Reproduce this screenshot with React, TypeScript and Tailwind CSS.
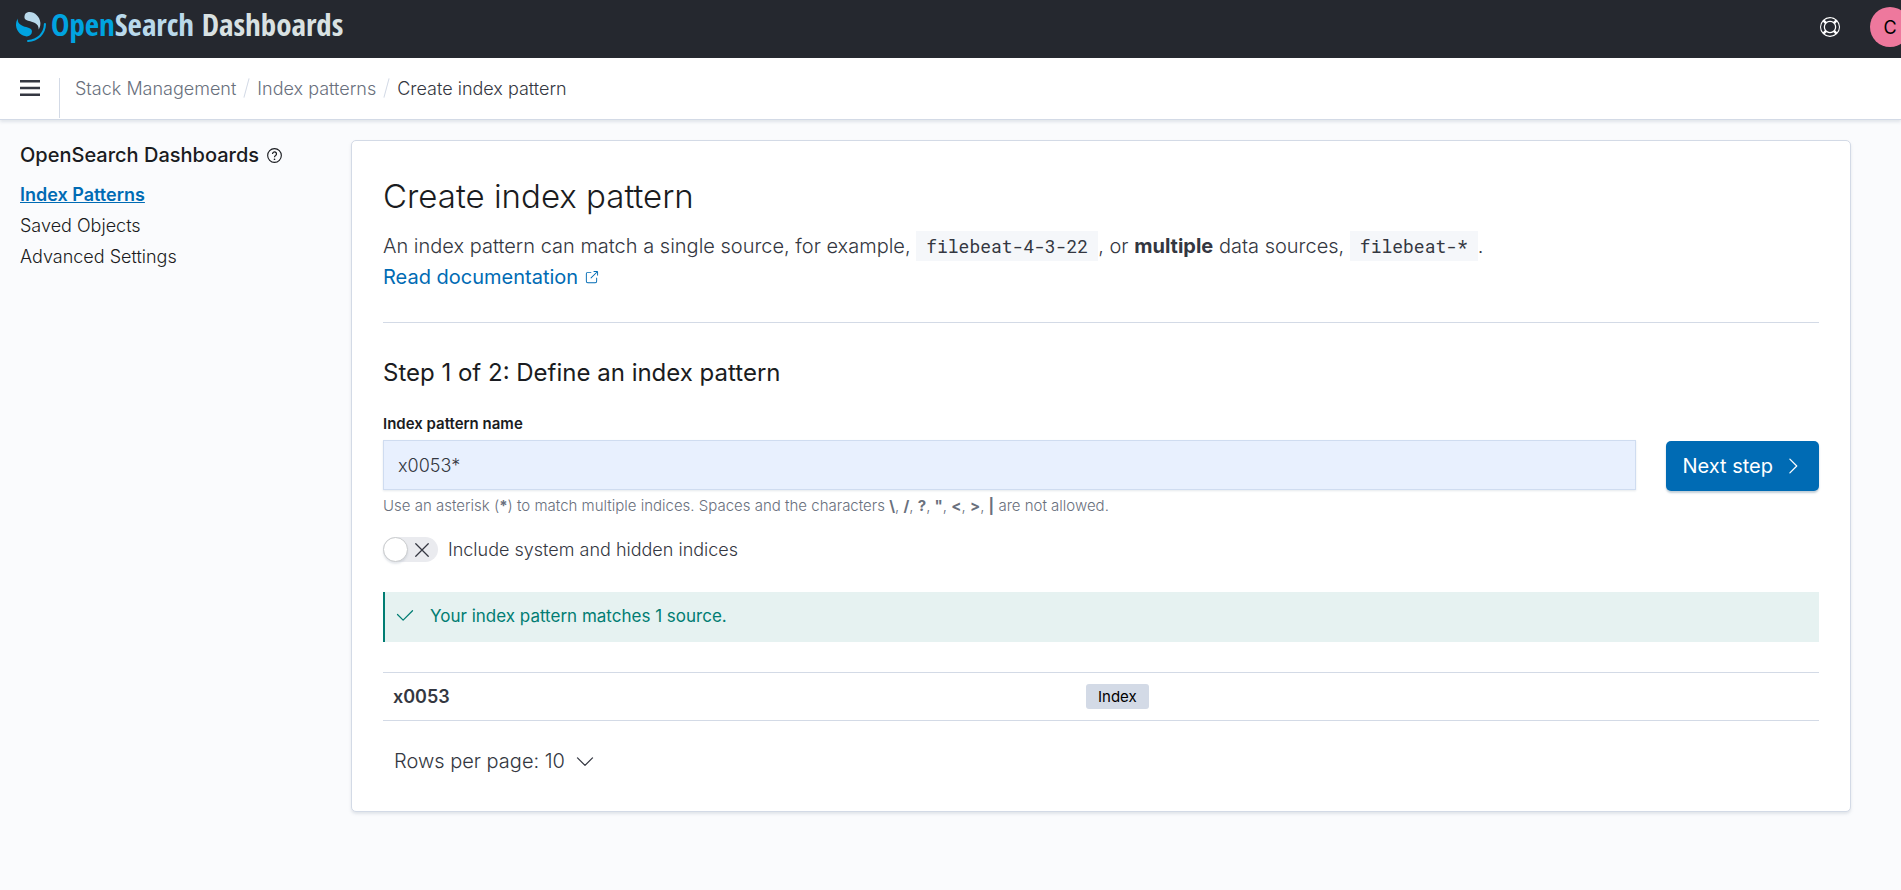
import { useState, type ReactNode } from "react";

type IconProps = { className?: string };

function LogoMark({ className }: IconProps) {
  return (
    <svg className={className} viewBox="0 0 64 64" aria-hidden="true">
      <path
        fill="#00A3E0"
        d="M61.74 23.5a2.26 2.26 0 0 0-2.26 2.26c0 18.62-15.1 33.71-33.72 33.71a2.26 2.26 0 0 0 0 4.53C46.88 64 64 46.88 64 25.76a2.26 2.26 0 0 0-2.26-2.26Z"
      />
      <path
        fill="#B9D9EB"
        d="M48.08 38c2.18-3.55 4.28-8.28 3.87-14.91C51.09 9.37 38.66-1.04 26.92.08c-4.6.45-9.31 4.19-8.9 10.9.19 2.92 1.62 4.64 3.93 5.96 2.21 1.26 5.05 2.06 8.26 2.96 3.89 1.09 8.39 2.32 11.85 4.87 4.15 3.06 6.99 6.6 6.02 13.23Z"
      />
      <path
        fill="#00A3E0"
        d="M3.92 14C1.74 17.55-.36 22.28.05 28.91c.86 13.72 13.29 24.13 25.03 23.01 4.59-.45 9.31-4.19 8.89-10.9-.18-2.92-1.6-4.64-3.92-5.96-2.21-1.26-5.05-2.06-8.26-2.96-3.89-1.09-8.39-2.32-11.85-4.87C5.79 24.17 2.95 20.63 3.92 14Z"
      />
    </svg>
  );
}

function HelpRingIcon({ className }: IconProps) {
  return (
    <svg className={className} viewBox="0 0 16 16" fill="currentColor" aria-hidden="true">
      <path d="M13.6 12.186l-1.357-1.358c-.025-.025-.058-.034-.084-.056.53-.794.84-1.746.84-2.773a4.977 4.977 0 00-.84-2.772c.026-.02.059-.03.084-.056L13.6 3.813a6.96 6.96 0 010 8.373zM8 15A6.956 6.956 0 013.814 13.6l1.358-1.358c.025-.025.034-.057.055-.084C6.02 12.688 6.974 13 8 13a4.978 4.978 0 002.773-.84c.02.026.03.058.056.083l1.357 1.358A6.956 6.956 0 018 15zm-5.601-2.813a6.963 6.963 0 010-8.373l1.359 1.358c.024.025.057.035.084.056A4.97 4.97 0 003 8c0 1.027.31 1.98.842 2.773-.027.022-.06.031-.084.056l-1.36 1.358zm5.6-.187A4 4 0 118 4a4 4 0 010 8zM8 1c1.573 0 3.019.525 4.187 1.4l-1.357 1.358c-.025.025-.035.057-.056.084A4.979 4.979 0 008 3a4.979 4.979 0 00-2.773.842c-.021-.027-.03-.059-.055-.084L3.814 2.4A6.957 6.957 0 018 1zm0-1a8.001 8.001 0 10.003 16.002A8.001 8.001 0 008 0z" />
    </svg>
  );
}

function MenuIcon({ className }: IconProps) {
  return (
    <svg className={className} viewBox="0 0 20 16" fill="currentColor" aria-hidden="true">
      <path d="M0 0h20v2.500H0zM0 6.750h20v2.500H0zM0 13.500h20V16H0z" />
    </svg>
  );
}

function QuestionIcon({ className }: IconProps) {
  return (
    <svg className={className} viewBox="0 0 16 16" fill="none" stroke="currentColor" aria-hidden="true">
      <circle cx="8" cy="8" r="7.3" strokeWidth="1.2" />
      <path d="M5.9 6.3a2.1 2.1 0 1 1 3.3 1.7C8.4 8.500 8 8.900 8 9.900" strokeWidth="1.3" />
      <circle cx="8" cy="12" r=".9" fill="currentColor" stroke="none" />
    </svg>
  );
}

function PopoutIcon({ className }: IconProps) {
  return (
    <svg className={className} viewBox="0 0 16 16" fill="currentColor" aria-hidden="true">
      <path d="M13 8.500a.5.5 0 111 0V12a2 2 0 01-2 2H4a2 2 0 01-2-2V4a2 2 0 012-2h3.500a.5.5 0 010 1H4a1 1 0 00-1 1v8a1 1 0 001 1h8a1 1 0 001-1V8.500zm-5.120.339a.5.5 0 11-.706-.707L13.305 2H10.500a.5.5 0 110-1H14a1 1 0 011 1v3.500a.5.5 0 11-1 0V2.720L7.880 8.838z" />
    </svg>
  );
}

function StrokeIcon({ className, d }: IconProps & { d: string }) {
  return (
    <svg
      className={className}
      viewBox="0 0 16 16"
      fill="none"
      stroke="currentColor"
      strokeLinecap="round"
      strokeLinejoin="round"
      aria-hidden="true"
    >
      <path d={d} />
    </svg>
  );
}

function Code({ children }: { children: ReactNode }) {
  return (
    <code className="bg-[#f5f7fa] px-[10px] py-[3px] font-['Roboto_Mono','DejaVu_Sans_Mono',monospace] text-[18px] font-normal text-[#343741]">
      {children}
    </code>
  );
}

function Slash() {
  return <span aria-hidden="true" className="mx-[10px] h-5 w-px rotate-[15deg] bg-[#d3dae6]" />;
}

const forbidden = ["\\", "/", "?", '"', "<", ">", "|"];

const sources = [{ name: "x0053", kind: "Index" }];

function TopBar() {
  return (
    <header className="flex h-[58px] items-start justify-between overflow-hidden bg-[#25282f]">
      <a href="#home" className="flex items-start pl-4">
        <LogoMark className="mt-3 size-[30px]" />
        <span className="ml-[5px] mt-1 whitespace-nowrap font-['Open_Sans_Condensed','Noto_Sans_Condensed','Liberation_Sans_Narrow',sans-serif] text-[31px] font-bold leading-10 text-[#d9e1e2]">
          <span className="text-[#00a3e0]">Open</span>
          <span className="text-[#b9d9eb]">Search</span> Dashboards
        </span>
      </a>
      <div className="-mr-[9px] flex items-center gap-[30px] pt-[7px]">
        <button type="button" aria-label="Help" className="text-white">
          <HelpRingIcon className="size-5" />
        </button>
        <button
          type="button"
          className="flex size-10 items-center justify-center rounded-full bg-[#ee789d] text-[18px] text-black"
        >
          C
        </button>
      </div>
    </header>
  );
}

function NavBar() {
  return (
    <div className="relative flex h-[62px] border-b border-[#d3dae6] bg-white shadow-[0_2px_3px_rgba(152,162,179,0.25)]">
      <button
        type="button"
        aria-label="Toggle primary navigation"
        className="flex h-[60px] items-center pl-5 pr-[19px] text-[#343741]"
      >
        <MenuIcon className="h-4 w-5" />
      </button>
      <div className="mt-5 h-10 w-px bg-[#d3dae6]" />
      <nav aria-label="Breadcrumb" className="flex h-[60px] items-center pl-[15px] text-[18px] font-light text-[#69707d]">
        <a href="#management">Stack Management</a>
        <Slash />
        <a href="#patterns">Index patterns</a>
        <Slash />
        <span className="text-[#343741]">Create index pattern</span>
      </nav>
    </div>
  );
}

function Sidebar() {
  return (
    <nav aria-label="OpenSearch Dashboards" className="w-[351px] shrink-0 pl-5 text-[#1a1c21]">
      <h2 className="flex items-center gap-2 text-[20px] font-medium leading-[30px]">
        OpenSearch Dashboards
        <QuestionIcon className="size-[15px]" />
      </h2>
      <ul className="mt-[9px] text-[18px] font-light leading-[31px]">
        <li>
          <a href="#patterns" className="font-semibold text-[#006bb4] underline">
            Index Patterns
          </a>
        </li>
        <li>
          <a href="#objects">Saved Objects</a>
        </li>
        <li>
          <a href="#settings">Advanced Settings</a>
        </li>
      </ul>
    </nav>
  );
}

export default function App() {
  const [pattern, setPattern] = useState("x0053*");
  const [hidden, setHidden] = useState(false);

  return (
    <div className="flex min-h-screen flex-col bg-[#fafbfd] font-['Inter',sans-serif] text-[#343741]">
      <TopBar />
      <NavBar />
      <div className="flex items-start pr-[50px] pt-5">
        <Sidebar />
        <main className="min-w-0 flex-1 rounded-[5px] border border-[#d3dae6] bg-white px-[31px] py-[30px] shadow-[0_2px_3px_rgba(152,162,179,0.25)]">
          <h1 className="text-[33px] font-light leading-[51px] text-[#1a1c21]">Create index pattern</h1>
          <p className="mt-[9px] text-[20px] font-light leading-[31px]">
            An index pattern can match a single source, for example, <Code>filebeat-4-3-22</Code>, or{" "}
            <strong className="font-bold">multiple</strong> data sources, <Code>filebeat-*</Code>.
            <br />
            <a href="#docs" className="inline-flex items-center gap-[6px] font-normal text-[#006bb4]">
              Read documentation
              <PopoutIcon className="size-[15px]" />
            </a>
          </p>
          <hr className="mt-[29px] border-[#d3dae6]" />

          <h2 className="mt-[30px] text-[24px] leading-10 text-[#1a1c21]">Step 1 of 2: Define an index pattern</h2>
          <form className="mt-5" onSubmit={(e) => e.preventDefault()}>
            <div className="flex items-start gap-[30px]">
              <div className="flex-1">
                <label htmlFor="pattern" className="block text-[15px] font-semibold leading-[22px] text-[#1a1c21]">
                  Index pattern name
                </label>
                <input
                  id="pattern"
                  type="text"
                  value={pattern}
                  onChange={(e) => setPattern(e.target.value)}
                  className="mt-[5px] block h-[50px] w-full border border-[#cfdcf0] bg-[#e8f0fe] px-[14px] text-[18px] font-light shadow-[0_1px_2px_rgba(152,162,179,0.25)]"
                />
                <p className="mt-[5px] text-[15px] font-light leading-[22px] text-[#69707d]">
                  Use an asterisk (<strong className="font-bold">*</strong>) to match multiple indices. Spaces and the
                  characters{" "}
                  {forbidden.map((c, i) => (
                    <span key={c}>
                      <strong className="font-bold">{c}</strong>
                      {i < forbidden.length - 1 ? ", " : " "}
                    </span>
                  ))}
                  are not allowed.
                </p>
              </div>
              <button
                type="submit"
                className="mt-7 flex h-[50px] items-center gap-[10px] rounded-[5px] bg-[#006bb4] px-4 text-[20px] text-white shadow-[0_2px_2px_rgba(54,97,126,0.3)]"
              >
                Next step
                <StrokeIcon className="size-5" d="M5.500 2.500 11 8l-5.500 5.500" />
              </button>
            </div>

            <div className="mt-5 flex h-[25px] items-center gap-[10px]">
              <div className="relative flex h-[25px] w-[55px] items-center rounded-full bg-[#eaebef]">
                <input
                  id="hidden-indices"
                  type="checkbox"
                  role="switch"
                  checked={hidden}
                  onChange={(e) => setHidden(e.target.checked)}
                  className="peer absolute inset-0 cursor-pointer appearance-none rounded-full"
                />
                <span className="pointer-events-none size-[25px] rounded-full border border-[#c9cbcd] bg-white shadow-[0_2px_2px_rgba(152,162,179,0.25)] peer-checked:translate-x-[30px]" />
                <StrokeIcon className="pointer-events-none ml-1 size-5" d="M3 3l10 10M13 3 3 13" />
              </div>
              <label htmlFor="hidden-indices" className="text-[18px] font-light">
                Include system and hidden indices
              </label>
            </div>
          </form>

          <div
            role="status"
            className="mt-[30px] flex h-[50px] items-center gap-[15px] border-l-2 border-[#017d73] bg-[#e6f2f1] px-[10px] text-[17px] text-[#017d73]"
          >
            <StrokeIcon className="size-5" d="M2 6l4.500 4.500L14 3" />
            Your index pattern matches 1 source.
          </div>

          <table className="mt-[30px] w-full table-fixed border-collapse text-[18px]">
            <tbody>
              {sources.map((s) => (
                <tr key={s.name} className="h-12 border-y border-[#d3dae6]">
                  <td className="w-[693px] px-[10px] font-semibold">{s.name}</td>
                  <td className="px-[10px]">
                    <span className="block w-fit rounded-[3px] bg-[#d3dae6] px-3 text-[15px] leading-[25px] text-black">
                      {s.kind}
                    </span>
                  </td>
                </tr>
              ))}
            </tbody>
          </table>

          <button type="button" className="mt-5 flex h-10 items-center gap-[10px] px-[11px] text-[20px] font-light">
            Rows per page: 10
            <StrokeIcon className="size-5" d="M2 5.500l6 6 6-6" />
          </button>
        </main>
      </div>
    </div>
  );
}
